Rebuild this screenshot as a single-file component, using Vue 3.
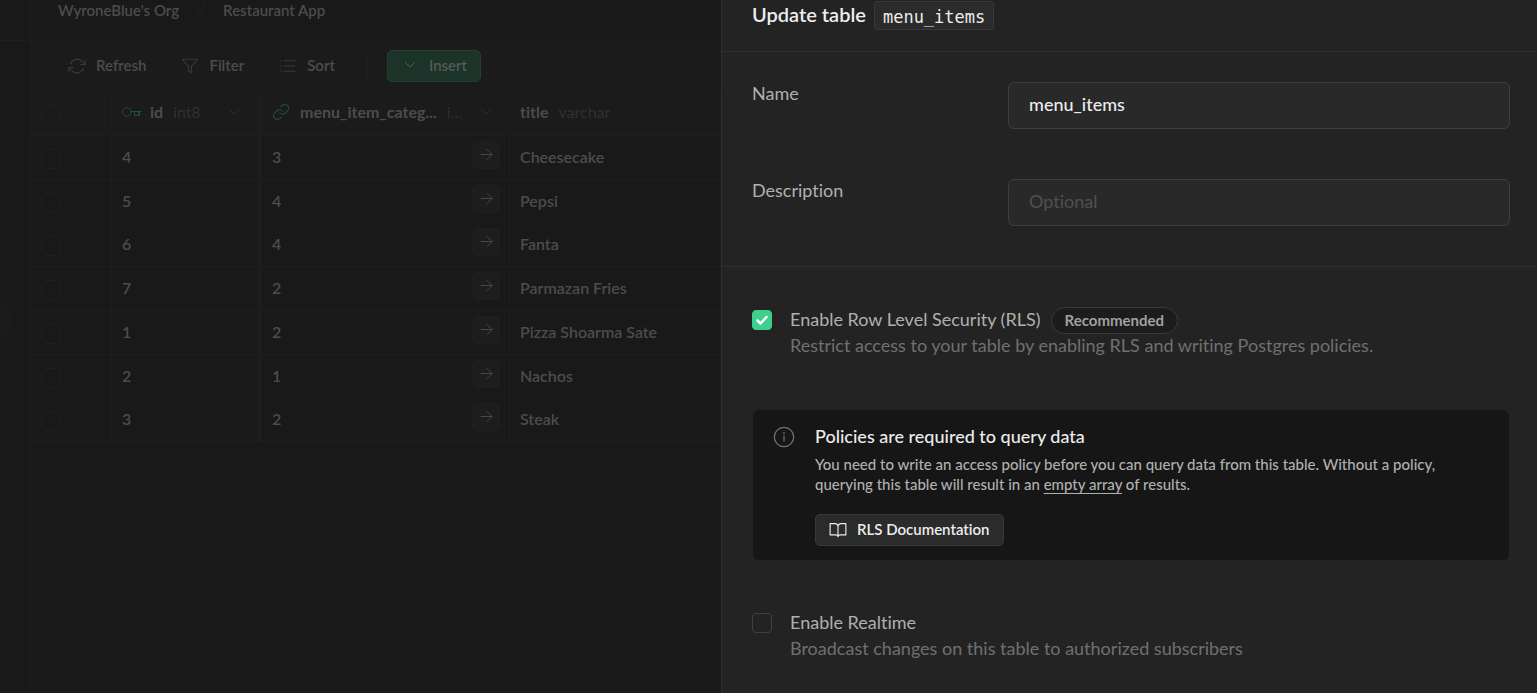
<script setup>
import { ref } from 'vue'

const rows = ref([
  { id: 4, category: 3, title: 'Cheesecake', line: true },
  { id: 5, category: 4, title: 'Pepsi', line: false },
  { id: 6, category: 4, title: 'Fanta', line: true },
  { id: 7, category: 2, title: 'Parmazan Fries', line: true },
  { id: 1, category: 2, title: 'Pizza Shoarma Sate', line: true },
  { id: 2, category: 1, title: 'Nachos', line: false },
  { id: 3, category: 2, title: 'Steak', line: true },
])

const name = ref('menu_items')
const description = ref('')
const rls = ref(true)
const realtime = ref(false)
</script>

<template>
  <div class="page">
    <aside class="rail">
      <div class="rail-top"></div>
      <div class="rail-handle"></div>
    </aside>

    <main class="main">
      <nav class="crumbs" aria-label="Breadcrumb">
        <a href="#">WyroneBlue's Org</a>
        <svg class="slash" viewBox="0 0 8 16" aria-hidden="true"><path d="M7.5 1 0.5 15" /></svg>
        <a href="#">Restaurant App</a>
      </nav>

      <div class="toolbar">
        <button class="tool refresh" type="button">
          <svg class="ico" viewBox="0 0 24 24" aria-hidden="true">
            <path d="M23 4v6h-6M1 20v-6h6" />
            <path d="M3.5 9a9 9 0 0 1 14.900-3.400L23 10M1 14l4.600 4.400A9 9 0 0 0 20.500 15" />
          </svg>
          Refresh
        </button>
        <button class="tool filter" type="button">
          <svg class="ico" viewBox="0 0 24 24" aria-hidden="true">
            <path d="M22 3H2l8 9.500V19l4 2v-8.500z" />
          </svg>
          Filter
        </button>
        <button class="tool sort" type="button">
          <svg class="ico" viewBox="0 0 24 24" aria-hidden="true">
            <path d="M7 5h14M7 12h14M7 19h14M2 5h1M2 12h1M2 19h1" />
          </svg>
          Sort
        </button>
        <span class="divider"></span>
        <button class="insert" type="button">
          <svg class="chev" viewBox="0 0 12 12" aria-hidden="true"><path d="m1.500 3.500 4.500 4.500 4.500-4.500" /></svg>
          Insert
        </button>
      </div>

      <table class="grid">
        <colgroup>
          <col class="c-check" />
          <col class="c-id" />
          <col class="c-cat" />
          <col />
        </colgroup>
        <thead>
          <tr>
            <th><input class="tick" type="checkbox" aria-label="Select all rows" /></th>
            <th class="frozen">
              <div class="head">
                <svg class="key" viewBox="0 0 20 12" aria-hidden="true">
                  <circle cx="5" cy="6" r="4.200" />
                  <path d="M9.200 5.500h10M17.500 5.500v4M12.500 5.500v4h4v-3" />
                </svg>
                <b>id</b><span class="type">int8</span>
                <svg class="chev end" viewBox="0 0 12 12" aria-hidden="true"><path d="m1.500 3.500 4.500 4.500 4.500-4.500" /></svg>
              </div>
            </th>
            <th>
              <div class="head cat">
                <svg class="link" viewBox="0 0 24 24" aria-hidden="true">
                  <path d="M10 13a5 5 0 0 0 7.540.540l3-3a5 5 0 0 0-7.070-7.070l-1.720 1.710" />
                  <path d="M14 11a5 5 0 0 0-7.540-.540l-3 3a5 5 0 0 0 7.070 7.070l1.710-1.710" />
                </svg>
                <b>menu_item_categ...</b><span class="type">i...</span>
                <svg class="chev end" viewBox="0 0 12 12" aria-hidden="true"><path d="m1.500 3.500 4.500 4.500 4.500-4.500" /></svg>
              </div>
            </th>
            <th><div class="head"><b>title</b><span class="type">varchar</span></div></th>
          </tr>
        </thead>
        <tbody>
          <tr v-for="row in rows" :key="row.id" :class="{ lined: row.line }">
            <td><input class="tick" type="checkbox" :aria-label="'Select row ' + row.id" /></td>
            <td class="frozen">{{ row.id }}</td>
            <td>
              <div class="ref">
                <span>{{ row.category }}</span>
                <button class="go" type="button" aria-label="View referenced record">
                  <svg viewBox="0 0 14 14" aria-hidden="true"><path d="M1 7h12M7.500 1.500 13 7l-5.500 5.500" /></svg>
                </button>
              </div>
            </td>
            <td>{{ row.title }}</td>
          </tr>
        </tbody>
      </table>
    </main>

    <form class="panel" @submit.prevent>
      <header class="panel-head">
        <h1>Update table</h1>
        <code>menu_items</code>
      </header>

      <section class="fields">
        <label for="table-name">Name</label>
        <input id="table-name" v-model="name" type="text" />
        <label for="table-description">Description</label>
        <input id="table-description" v-model="description" type="text" placeholder="Optional" />
      </section>

      <section class="options">
        <div class="option">
          <span class="box">
            <input id="rls" v-model="rls" type="checkbox" />
            <svg v-if="rls" viewBox="0 0 20 20" aria-hidden="true"><path d="m5.500 10.500 3 3 6-6.500" /></svg>
          </span>
          <div>
            <div class="option-title">
              <label for="rls">Enable Row Level Security (RLS)</label>
              <span class="badge">Recommended</span>
            </div>
            <p>Restrict access to your table by enabling RLS and writing Postgres policies.</p>
          </div>
        </div>

        <div class="alert">
          <svg class="info" viewBox="0 0 22 22" aria-hidden="true">
            <circle cx="11" cy="11" r="9.700" />
            <path d="M11 10v5M11 6.500v1" />
          </svg>
          <div>
            <h2>Policies are required to query data</h2>
            <p>
              You need to write an access policy before you can query data from this table. Without a policy,
              querying this table will result in an <a href="#">empty array</a> of results.
            </p>
            <button class="docs" type="button">
              <svg viewBox="0 0 24 24" aria-hidden="true">
                <path d="M1.500 3.500H8a4 4 0 0 1 4 4V21a3 3 0 0 0-3-2.500H1.500zM22.500 3.500H16a4 4 0 0 0-4 4V21a3 3 0 0 1 3-2.500h7.500z" />
              </svg>
              RLS Documentation
            </button>
          </div>
        </div>

        <div class="option">
          <span class="box">
            <input id="realtime" v-model="realtime" type="checkbox" />
            <svg v-if="realtime" viewBox="0 0 20 20" aria-hidden="true"><path d="m5.500 10.500 3 3 6-6.500" /></svg>
          </span>
          <div>
            <div class="option-title"><label for="realtime">Enable Realtime</label></div>
            <p>Broadcast changes on this table to authorized subscribers</p>
          </div>
        </div>
      </section>
    </form>
  </div>
</template>

<style>
body {
  background: #191919;
}
</style>

<style scoped>
.page,
.page * {
  box-sizing: border-box;
}
.page {
  display: grid;
  grid-template-columns: 30px 691fr 816fr;
  min-height: 100vh;
  background: #191919;
  color: #4c4c4c;
  font-family: Lato, "Liberation Sans", sans-serif;
  font-size: 16px;
  line-height: 20px;
  font-variant-ligatures: none;
}
button,
input {
  font: inherit;
  font-variant-ligatures: none;
  color: inherit;
  margin: 0;
}
button {
  cursor: pointer;
}
svg {
  display: block;
  flex: none;
  fill: none;
  stroke: currentColor;
  stroke-linecap: round;
  stroke-linejoin: round;
}
h1,
h2,
p {
  margin: 0;
  font-weight: 400;
}

.rail-top {
  height: 41px;
  border-bottom: 1px solid #1e1e1e;
}
.rail-handle {
  width: 10px;
  height: 34px;
  margin-top: 262px;
  border-radius: 0 6px 6px 0;
  background: #1b1b1b;
}

.main {
  min-width: 0;
  overflow: hidden;
  border-left: 1px solid #1e1e1e;
}
.crumbs {
  display: flex;
  align-items: center;
  height: 41px;
  padding: 0 27px 21px;
  border-bottom: 1px solid #1e1e1e;
  font-size: 15px;
  font-weight: 600;
}
.crumbs a {
  color: inherit;
  text-decoration: none;
}
.slash {
  width: 8px;
  height: 16px;
  margin: 0 18px;
  color: #232323;
}
.toolbar {
  display: flex;
  align-items: center;
  height: 50px;
  padding-left: 37px;
  background: #1b1b1b;
  font-size: 15px;
  font-weight: 600;
}
.tool {
  display: flex;
  align-items: center;
  gap: 10px;
  padding: 0 0 2px;
  border: 0;
  background: none;
}
.ico {
  width: 18px;
  height: 18px;
  margin-top: 2px;
  color: #393939;
  stroke-width: 1.500;
}
.filter {
  margin-left: 35px;
}
.sort {
  margin-left: 35px;
}
.divider {
  width: 1px;
  height: 26px;
  margin: 0 19px 0 32px;
  background: #1f1f1f;
}
.insert {
  display: flex;
  align-items: center;
  gap: 13px;
  height: 32px;
  padding: 0 13px 2px 16px;
  border: 1px solid #21402f;
  border-radius: 5px;
  background: #1c3329;
  color: #535b56;
}
.chev {
  width: 12px;
  height: 12px;
}

.grid {
  width: 100%;
  table-layout: fixed;
  border-spacing: 0;
  font-weight: 600;
}
.c-check {
  width: 81px;
}
.c-id {
  width: 150px;
}
.c-cat {
  width: 248px;
}
th,
td {
  height: 43px;
  padding: 0 10px 2px;
  border-right: 1px solid #1e1e1e;
  text-align: left;
  vertical-align: middle;
  white-space: nowrap;
}
th {
  height: 45px;
  padding-bottom: 4px;
  background: #1b1b1b;
  border-top: 1px solid #1e1e1e;
  border-bottom: 1px solid #1f1f1f;
}
.lined td {
  height: 44px;
  border-bottom: 1px solid #1f1f1f;
}
.frozen {
  border-right: 5px solid #1d1d1d;
}
.tick {
  display: block;
  appearance: none;
  width: 20px;
  height: 20px;
  margin-top: 4px;
  border: 1px solid #1f1f1f;
  border-radius: 5px;
}
.head {
  display: flex;
  align-items: center;
  gap: 10px;
}
.head b {
  font-weight: 700;
}
.type {
  color: #303030;
  font-weight: 400;
}
.key {
  width: 20px;
  height: 12px;
  margin-right: -2px;
  color: #1e5039;
}
.link {
  width: 18px;
  height: 18px;
  color: #1e5039;
  stroke-width: 1.500;
}
.end {
  margin: 0 7px 0 auto;
  color: #303030;
}
.ref {
  display: flex;
  align-items: center;
  justify-content: space-between;
}
.go {
  display: grid;
  place-items: center;
  width: 28px;
  height: 28px;
  margin: 0 -1px 4px 0;
  padding: 0;
  border: 1px solid #1f1f1f;
  border-radius: 5px;
  background: #1d1d1d;
}
.go svg {
  width: 13px;
  height: 13px;
}

.panel {
  min-width: 0;
  border-left: 1px solid #2e2e2e;
  background: #232323;
  font-size: 18px;
  line-height: 24px;
  color: #b0b0b0;
}
.panel-head {
  display: flex;
  gap: 8px;
  height: 52px;
  padding: 1px 30px 0;
  border-bottom: 1px solid #2e2e2e;
  color: #ededed;
}
.panel-head h1 {
  font-size: 20px;
  line-height: 26px;
  font-weight: 600;
}
.panel-head code {
  height: 29px;
  padding: 1px 8px 0;
  border: 1px solid #383838;
  border-radius: 3px;
  background: #2b2b2b;
  font-family: "DejaVu Sans Mono", "Liberation Mono", monospace;
  font-size: 17px;
  line-height: 28px;
}
.fields {
  display: grid;
  grid-template-columns: 256px minmax(0, 1fr);
  row-gap: 50px;
  padding: 30px 27px 40px 30px;
  border-bottom: 1px solid #2e2e2e;
}
.fields label {
  line-height: 22px;
}
.fields input {
  width: 100%;
  height: 47px;
  padding: 0 20px 3px;
  border: 1px solid #3e3e3e;
  border-radius: 6px;
  background: #292929;
  color: #ededed;
}
#table-name {
  font-weight: 500;
}
.fields input::placeholder {
  color: #505050;
  opacity: 1;
}
.options {
  padding: 40px 27px 30px 30px;
}
.option {
  display: flex;
  gap: 18px;
}
.box {
  display: grid;
  flex: none;
  width: 20px;
  height: 20px;
  margin-top: 3px;
}
.box input,
.box svg {
  grid-area: 1 / 1;
  width: 20px;
  height: 20px;
}
.box input {
  appearance: none;
  border: 1px solid #404040;
  border-radius: 4px;
}
.box input:checked {
  border-color: #3ecf8e;
  background: #3ecf8e;
}
.box svg {
  color: #ffffff;
  stroke-width: 2.500;
  pointer-events: none;
}
.option-title {
  display: flex;
  align-items: flex-start;
  gap: 10px;
  height: 26px;
}
.option p {
  color: #707070;
}
.badge {
  height: 27px;
  padding: 0 13px;
  border: 1px solid #3a3a3a;
  border-radius: 14px;
  background: #1c1c1c;
  color: #a0a0a0;
  font-size: 15px;
  line-height: 24px;
  font-weight: 700;
}
.alert {
  display: flex;
  gap: 20px;
  margin: 53px 1px 50px;
  padding: 15px 52px 14px 20px;
  border-radius: 6px;
  background: #161616;
}
.info {
  width: 22px;
  height: 22px;
  margin-top: 1px;
  color: #707070;
  stroke-width: 1.300;
}
.alert h2 {
  color: #ededed;
  font-size: 18px;
  line-height: 22px;
  font-weight: 500;
}
.alert p {
  margin-top: 7px;
  font-size: 15px;
  line-height: 20px;
  font-weight: 500;
}
.alert a {
  color: inherit;
  text-underline-offset: 3px;
}
.docs {
  display: flex;
  align-items: center;
  gap: 10px;
  height: 32px;
  margin-top: 20px;
  padding: 0 13px 2px;
  border: 1px solid #383838;
  border-radius: 5px;
  background: #2b2b2b;
  color: #ededed;
  font-size: 15px;
  font-weight: 600;
}
.docs svg {
  width: 18px;
  height: 18px;
  margin-top: 2px;
  stroke-width: 1.500;
}
</style>
